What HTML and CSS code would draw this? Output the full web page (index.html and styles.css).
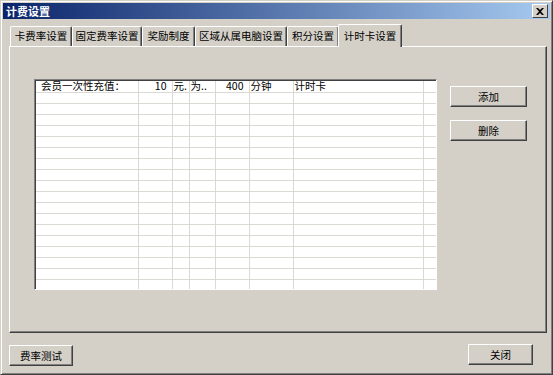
FILE: index.html
```html
<!DOCTYPE html>
<html lang="zh-CN">
<head>
    <meta charset="UTF-8">
    <title>计费设置</title>
    <link rel="stylesheet" href="styles.css">
</head>
<body>
    <div id="window">
        <div class="titlebar">
            <span class="title">计费设置</span>
            <span class="close">
                <svg width="8" height="7" viewBox="0 0 8 7"><path d="M0 0h2l2 2 2-2h2L5 3.5 8 7H6L4 5 2 7H0l3-3.5z" fill="#000"/></svg>
            </span>
        </div>
        <ul class="tabs">
            <li class="t1">卡费率设置</li>
            <li class="t2">固定费率设置</li>
            <li class="t3">奖励制度</li>
            <li class="t4">区域从属电脑设置</li>
            <li class="t5">积分设置</li>
            <li class="t6 select">计时卡设置</li>
        </ul>
        <div class="panel">
            <div class="grid">
                <table id="list">
                    <colgroup>
                        <col style="width:102px"><col style="width:34px"><col style="width:17px"><col style="width:26px">
                        <col style="width:34px"><col style="width:44px"><col style="width:130px"><col>
                    </colgroup>
                    <tbody>
                        <tr>
                            <td>会员一次性充值：</td>
                            <td class="num">10</td>
                            <td>元.</td>
                            <td>为..</td>
                            <td class="num">400</td>
                            <td>分钟</td>
                            <td>计时卡</td>
                            <td></td>
                        </tr>
                    </tbody>
                </table>
            </div>
            <div class="side">
                <button class="btn">添加</button>
                <button class="btn">删除</button>
            </div>
        </div>
        <div class="footer">
            <button class="btn test">费率测试</button>
            <button class="btn closebtn">关闭</button>
        </div>
    </div>
    <script>
        // 补齐空行
        var oBody = document.querySelector("#list tbody");
        for(var i = 1;i < 19;i++){
            var tr = document.createElement("tr");
            for(var j = 0;j < 8;j++){
                tr.appendChild(document.createElement("td"));
            }
            oBody.appendChild(tr);
        }
    </script>
</body>
</html>
```

FILE: styles.css
```css
*{
    margin: 0px;
    padding: 0px;
    box-sizing: border-box;
}
body{
    background: #d4d0c8;
    font-family: "Noto Sans CJK SC", "DejaVu Sans", sans-serif;
    font-size: 10.5px;
    color: #000;
}
#window{
    width: 553px;
    height: 375px;
    border: 1px solid #404040;
    border-top-color: #d4d0c8;
    border-left-color: #d4d0c8;
    box-shadow: inset 1px 1px 0 #fff, inset -1px -1px 0 #808080;
    padding: 2px;
    display: flex;
    flex-direction: column;
}
.titlebar{
    height: 16px;
    background: linear-gradient(to right, #0a246a, #a6caf0);
    display: flex;
    align-items: center;
    justify-content: space-between;
    padding: 0 2px 0 3px;
}
.title{
    color: #fff;
    font-weight: bold;
    font-size: 11px;
    line-height: 16px;
}
.close{
    width: 16px;
    height: 14px;
    background: #d4d0c8;
    border: 1px solid #404040;
    border-top-color: #fff;
    border-left-color: #fff;
    display: flex;
    align-items: center;
    justify-content: center;
}
.tabs{
    list-style: none;
    display: flex;
    align-items: flex-end;
    height: 27px;
    padding-left: 6px;
    position: relative;
    z-index: 1;
}
.tabs>li{
    height: 20px;
    border: 1px solid #d4d0c8;
    border-top-color: #fff;
    border-left-color: #fff;
    border-right: 1px solid #404040;
    border-bottom: none;
    box-shadow: inset -1px 0 0 #808080;
    border-radius: 2px 2px 0 0;
    text-align: center;
    line-height: 18px;
    white-space: nowrap;
}
.tabs>.t1{ width: 62px; margin-left: 1px; }
.tabs>.t2{ width: 70px; }
.tabs>.t3{ width: 53px; }
.tabs>.t4{ width: 92px; }
.tabs>.t5{ width: 52px; }
.tabs>.select{
    width: 64px;
    height: 23px;
    margin-bottom: -1px;
    margin-left: -1px;
    background: #d4d0c8;
    line-height: 21px;
}
.panel{
    margin: 0 3px 0 6px;
    height: 287px;
    border: 1px solid #404040;
    border-top-color: #fff;
    border-left-color: #fff;
    box-shadow: inset -1px -1px 0 #808080;
    display: flex;
    align-items: flex-start;
    padding: 32px 0 0 24px;
}
.grid{
    width: 403px;
    height: 211px;
    background: #fff;
    border: 1px solid #fff;
    border-top-color: #808080;
    border-left-color: #808080;
    box-shadow: inset 1px 1px 0 #404040;
    overflow: hidden;
    padding: 1px 0 0 1px;
}
#list{
    width: 100%;
    border-collapse: collapse;
    table-layout: fixed;
}
#list td{
    height: 11px;
    border-right: 1px solid #dcd8d4;
    border-bottom: 1px solid #dcd8d4;
    line-height: 10px;
    font-size: 10.5px;
    white-space: nowrap;
    padding: 0 1px;
    vertical-align: top;
}
#list td:first-child{
    padding-left: 5px;
}
#list td.num{
    text-align: right;
    padding-right: 5px;
}
#list td:last-child{
    border-right: none;
}
.side{
    display: flex;
    flex-direction: column;
    gap: 13px;
    margin-left: 13px;
    margin-top: 7px;
}
.btn{
    width: 77px;
    height: 21px;
    background: #d4d0c8;
    font-family: inherit;
    font-size: 10.5px;
    color: #000;
    border: 1px solid #404040;
    border-top-color: #fff;
    border-left-color: #fff;
    box-shadow: inset -1px -1px 0 #808080;
}
.footer{
    flex: 1;
    display: flex;
    justify-content: space-between;
    align-items: flex-start;
    padding: 12px 17px 0 6px;
}
.footer>.test{
    width: 64px;
}
.footer>.closebtn{
    width: 65px;
    margin-top: -1px;
}
```
